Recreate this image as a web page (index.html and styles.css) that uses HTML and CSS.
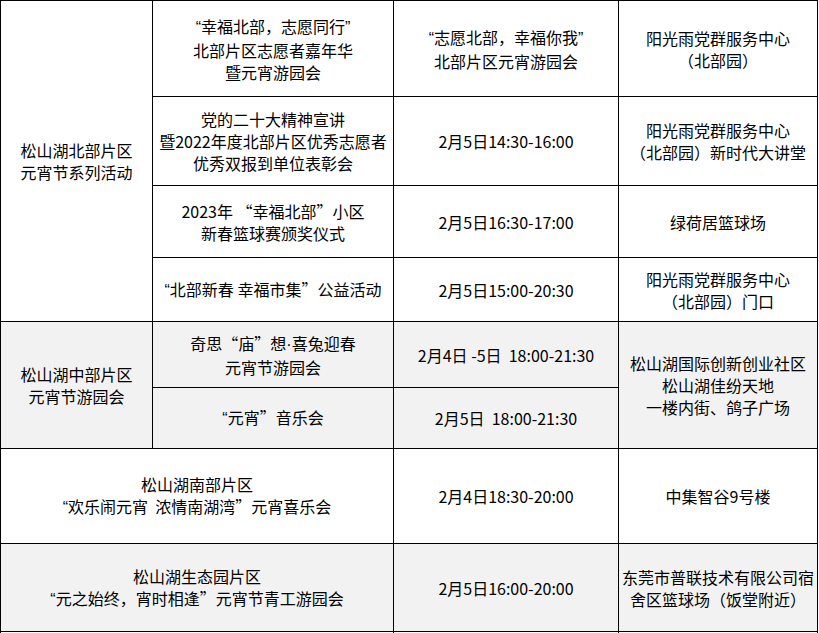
FILE: index.html
```html
<!DOCTYPE html>
<html lang="zh-CN">
<head>
<meta charset="utf-8">
<title>元宵节活动</title>
<link rel="stylesheet" href="styles.css">
</head>
<body>
<table class="sched">
  <colgroup>
    <col class="c1"><col class="c2"><col class="c3"><col class="c4">
  </colgroup>
  <tr class="r1">
    <td rowspan="4">松山湖北部片区<br>元宵节系列活动</td>
    <td><span class="q">“</span>幸福北部，志愿同行<span class="q">”</span><br>北部片区志愿者嘉年华<br>暨元宵游园会</td>
    <td><span class="q">“</span>志愿北部，幸福你我<span class="q">”</span><br>北部片区元宵游园会</td>
    <td>阳光雨党群服务中心<br>（北部园）</td>
  </tr>
  <tr class="r2">
    <td>党的二十大精神宣讲<br>暨2022年度北部片区优秀志愿者<br>优秀双报到单位表彰会</td>
    <td>2月5日14:30-16:00</td>
    <td>阳光雨党群服务中心<br>（北部园）新时代大讲堂</td>
  </tr>
  <tr class="r3">
    <td>2023年 “幸福北部”小区<br>新春篮球赛颁奖仪式</td>
    <td>2月5日16:30-17:00</td>
    <td>绿荷居篮球场</td>
  </tr>
  <tr class="r4">
    <td><span class="q">“</span>北部新春 幸福市集”公益活动</td>
    <td>2月5日15:00-20:30</td>
    <td>阳光雨党群服务中心<br>（北部园）门口</td>
  </tr>
  <tr class="r5 gray">
    <td rowspan="2">松山湖中部片区<br>元宵节游园会</td>
    <td>奇思“庙”想<span class="q">·</span>喜兔迎春<br>元宵节游园会</td>
    <td>2月4日 -5日&nbsp; 18:00-21:30</td>
    <td rowspan="2">松山湖国际创新创业社区<br>松山湖佳纷天地<br>一楼内街、鸽子广场</td>
  </tr>
  <tr class="r6 gray">
    <td><span class="q">“</span>元宵”音乐会</td>
    <td>2月5日&nbsp; 18:00-21:30</td>
  </tr>
  <tr class="r7">
    <td colspan="2">松山湖南部片区<br><span class="q">“</span>欢乐闹元宵&nbsp; 浓情南湖湾”元宵喜乐会</td>
    <td>2月4日18:30-20:00</td>
    <td>中集智谷9号楼</td>
  </tr>
  <tr class="r8 gray">
    <td colspan="2">松山湖生态园片区<br><span class="q">“</span>元之始终，宵时相逢”元宵节青工游园会</td>
    <td>2月5日16:00-20:00</td>
    <td>东莞市普联技术有限公司宿<br>舍区篮球场（饭堂附近）</td>
  </tr>
  <tr class="r9">
    <td colspan="2">&nbsp;</td>
    <td>&nbsp;</td>
    <td>&nbsp;</td>
  </tr>
</table>
</body>
</html>
```

FILE: styles.css
```css
html, body {
  margin: 0;
  padding: 0;
  background: #ffffff;
}

body {
  font-family: "Noto Sans CJK SC", "Noto Sans", sans-serif;
  font-size: 16px;
  color: #000000;
}

.sched {
  border-collapse: collapse;
  table-layout: fixed;
  width: 817px;
}

.c1 { width: 152px; }
.c2 { width: 241px; }
.c3 { width: 225px; }
.c4 { width: 199px; }

.sched td {
  border: 1px solid #000000;
  padding: 0 2px;
  text-align: center;
  vertical-align: middle;
  line-height: 22px;
  overflow: hidden;
}

.q {
  font-family: "Liberation Sans", sans-serif;
}

.gray td {
  background: #f2f2f2;
}

.r1 { height: 96px; }
.r2 { height: 89px; }
.r3 { height: 72px; }
.r4 { height: 64px; }
.r5 { height: 66px; }
.r6 { height: 61px; }
.r7 { height: 95px; }
.r8 { height: 88px; }
.r9 { height: 60px; }
```
